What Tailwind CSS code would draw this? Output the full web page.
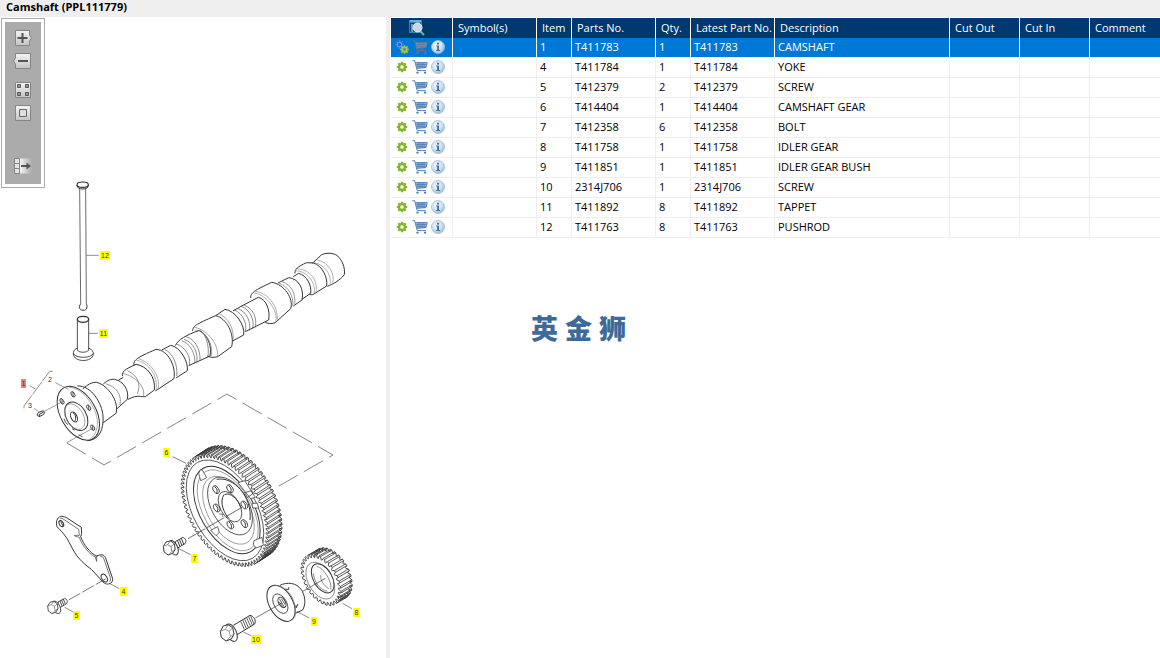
<!DOCTYPE html>
<html lang="en">
<head>
    <meta charset="UTF-8">
    <meta name="viewport" content="width=device-width, initial-scale=1.0">
    <title>Camshaft (PPL111779)</title>
    <script src="https://cdn.jsdelivr.net/npm/@tailwindcss/browser@4"></script>
</head>
<body class="flex h-screen flex-col overflow-hidden bg-white font-['Open_Sans','Noto_Sans',sans-serif] text-black">
    <!-- Shared icons -->
    <svg class="absolute h-0 w-0" aria-hidden="true">
        <defs>
            <linearGradient id="btn-fill" x1="0" y1="0" x2="0" y2="1">
                <stop offset="0" stop-color="#f4f4f4"/><stop offset="1" stop-color="#c4c4c4"/>
            </linearGradient>
            <linearGradient id="fade-fill" x1="0" y1="0" x2="1" y2="0">
                <stop offset="0" stop-color="#f4f4f4"/><stop offset="1" stop-color="#ababab"/>
            </linearGradient>
            <radialGradient id="info-fill" cx=".4" cy=".35" r=".65">
                <stop offset="0" stop-color="#f2f8fc"/><stop offset=".6" stop-color="#cfe1ee"/><stop offset="1" stop-color="#9dbfd8"/>
            </radialGradient>
            <symbol id="icon-gear" viewBox="0 0 12 12">
                <g stroke="#82b52a" stroke-width="2.2">
                    <path d="M6 .8V11.2M.8 6H11.2M2.3 2.3L9.7 9.7M9.7 2.3L2.3 9.7"/>
                </g>
                <circle cx="6" cy="6" r="2.9" fill="#fff" stroke="#82b52a" stroke-width="2.2"/>
            </symbol>
            <symbol id="icon-gears" viewBox="0 0 14 14">
                <g stroke="#4c7de0" stroke-width="1.6">
                    <path d="M4.5 .3V8.7M.3 4.5H8.7M1.5 1.5L7.5 7.5M7.5 1.5L1.5 7.5"/>
                </g>
                <circle cx="4.5" cy="4.5" r="2.2" fill="#1c62c8" stroke="#6b96ee" stroke-width="1.2"/>
                <g stroke="#9ac43a" stroke-width="1.8">
                    <path d="M9.5 5.2V13.8M5.2 9.5H13.8M6.4 6.4L12.6 12.6M12.6 6.4L6.4 12.6"/>
                </g>
                <circle cx="9.5" cy="9.5" r="2.2" fill="#4b86b0" stroke="#a4cb45" stroke-width="1.6"/>
            </symbol>
            <symbol id="icon-cart" viewBox="0 0 16 14">
                <path d="M3.5 2.5H15L14 7.5L4.8 8.2Z" fill="#b9d0e8"/>
                <path d="M.3 .7H2.6L5.2 10.6H14M3.3 2.6H15.3L14 7.6L4.7 8.4M3.8 4.3H14.6M4.3 6.2H14.2M6 2.6V8M8 2.6V8M10 2.6V8M12 2.6V8" fill="none" stroke="#4a79b0" stroke-width=".9"/>
                <path d="M4.4 12.7H6.6M12 12.7H14.2" stroke="#4a79b0" stroke-width="1.8"/>
            </symbol>
            <symbol id="icon-cart-muted" viewBox="0 0 16 14">
                <path d="M3.5 2.5H15L14 7.5L4.8 8.2Z" fill="#6fa3d4"/>
                <path d="M.3 .7H2.6L5.2 10.6H14M3.3 2.6H15.3L14 7.6L4.7 8.4M3.8 4.3H14.6M4.3 6.2H14.2M6 2.6V8M8 2.6V8M10 2.6V8M12 2.6V8" fill="none" stroke="#66788e" stroke-width=".9"/>
                <path d="M4.4 12.7H6.6M12 12.7H14.2" stroke="#66788e" stroke-width="1.8"/>
            </symbol>
            <symbol id="icon-info" viewBox="0 0 14 14">
                <circle cx="7" cy="7" r="6.5" fill="url(#info-fill)" stroke="#9fbfd8" stroke-width=".8"/>
                <path d="M6 2.8H8V4.6H6ZM5.2 5.6H8V10H9V11H5.2V10H6.2V6.6H5.2Z" fill="#3f6fa5"/>
            </symbol>
        </defs>
    </svg>

    <header class="h-[17px] shrink-0 bg-[#efefef] pl-[6px]">
        <h1 class="text-[11px] leading-[14px] font-bold">Camshaft (PPL111779)</h1>
    </header>

    <main class="flex min-h-0 flex-1">
        <!-- Illustration -->
        <section class="relative w-[386px] shrink-0 overflow-hidden">
            <svg viewBox="0 17 386 641" class="block w-full" fill="none" stroke="#333" stroke-width="1" font-family="Liberation Sans, Arial, sans-serif" font-size="7">
                <!-- assembly lines -->
                <path d="M67 443L104 465L227 394L333 455L272 490" stroke="#666" stroke-width=".8" stroke-dasharray="22 7"/>

                <!-- pushrod and tappet -->
                <g transform="translate(60 170) scale(.33333)" stroke-width="2.6">
                    <ellipse cx="68" cy="44" rx="17" ry="8" stroke-width="3.5"/>
                    <path d="M51 46C52 54 57 57 68 57S84 54 85 46" stroke-width="3"/>
                    <path d="M59 56L62 402M77 56L79 402" stroke="#555"/>
                    <path d="M62 402C56 408 56 420 69 421S83 408 79 402" stroke-width="3"/>
                    <ellipse cx="69" cy="448" rx="17" ry="9" stroke-width="4"/>
                    <path d="M52 449V540C56 549 82 549 86 540V449" />
                    <path d="M52 534C42 538 40 545 40 552C42 578 98 578 100 552C100 545 96 538 86 534M40 550C46 566 94 566 100 550"/>
                    <path d="M79 256H116M87 490H114" stroke="#555" stroke-width="2"/>
                </g>

                <!-- camshaft, flange end -->
                <g transform="translate(0 340) scale(.33333)" stroke-width="3">
                    <path d="M232 138C275 136 306 190 309 228C312 268 298 300 262 302"/>
                    <ellipse cx="235" cy="220" rx="88" ry="53" transform="rotate(60 235 220)" fill="#fff"/>
                    <path d="M207 142C250 142 288 205 292 240C295 275 278 292 270 298" stroke="#888" stroke-width="2"/>
                    <ellipse cx="229" cy="229" rx="46" ry="30" transform="rotate(60 229 229)"/>
                    <ellipse cx="224" cy="230" rx="42" ry="26" transform="rotate(60 224 230)" stroke="#888" stroke-width="2"/>
                    <ellipse cx="222" cy="231" rx="16" ry="9" transform="rotate(65 222 231)"/>
                    <path d="M219 218C228 224 229 238 224 244"/>
                    <g stroke-width="2.5">
                        <ellipse cx="186" cy="184" rx="9" ry="5" transform="rotate(60 186 184)"/>
                        <ellipse cx="219" cy="163" rx="9" ry="5" transform="rotate(60 219 163)"/>
                        <ellipse cx="266" cy="203" rx="9" ry="5" transform="rotate(60 266 203)"/>
                        <ellipse cx="278" cy="263" rx="9" ry="5" transform="rotate(60 278 263)"/>
                        <path d="M192 236C195 246 200 252 204 254M216 266L224 270M236 284L248 291M219 156V171M186 178V191M266 197V210M278 257V270"/>
                    </g>
                    <path d="M248 147C262 134 276 126 290 127C325 136 358 185 348 220L310 248"/>
                    <path d="M310 132C322 120 334 117 344 118C372 124 388 152 382 178L350 207"/>
                    <path d="M317 131C350 140 366 165 360 196" stroke-width="2" stroke="#666"/>
                    <path d="M368 108C364 96 374 88 408 73C442 78 468 112 463 150L436 170C422 172 416 162 384 178M356 120L370 112"/>
                    <path d="M370 101C404 108 438 140 430 169M382 92C412 105 424 130 412 162" stroke-width="2" stroke="#666"/>
                    <path d="M402 77C400 60 408 54 468 28C506 30 528 80 522 116L466 153"/>
                    <path d="M408 60C446 68 476 108 468 150M412 55C450 64 484 108 474 148" stroke="#888" stroke-width="2"/>
                    <!-- dowel and item bracket -->
                    <path d="M158 94H149L72 198V208" stroke="#555" stroke-width="2" stroke-dasharray="46 3"/>
                    <path d="M89 137L106 147M166 128L205 148M102 205L116 215M135 213L187 185M280 264L200 308" stroke="#666" stroke-width="2"/>
                    <path d="M112 222L116 217L130 212L134 217L131 223L118 230L112 226ZM118 230V223L131 216"/>
                </g>

                <!-- camshaft, far end -->
                <g transform="translate(150 240) scale(.33333)" stroke-width="3">
                    <path d="M35 330L62 316C90 320 116 365 112 392L78 414"/>
                    <path d="M44 328C68 340 84 372 80 408" stroke-width="2" stroke="#555"/>
                    <path d="M76 317C84 298 110 285 148 271C176 285 186 325 180 348L116 377"/>
                    <path d="M80 312C104 320 124 350 118 376M96 302C122 312 138 345 134 370M102 298C130 306 146 340 140 367M108 290C138 298 152 332 150 362M150 272C170 284 178 320 174 350" stroke-width="2" stroke="#555"/>
                    <path d="M128 273C128 260 134 254 197 227C232 235 254 285 245 320L203 350C190 354 180 352 172 348"/>
                    <path d="M133 262C176 270 208 318 202 350M136 270C170 275 190 310 184 348" stroke-width="2" stroke="#777"/>
                    <path d="M197 227L225 208C256 212 286 256 281 285L248 303"/>
                    <path d="M204 220C234 230 254 268 249 300" stroke="#777" stroke-width="2"/>
                    <path d="M249 213L275 198L325 172C350 178 361 212 356 240L286 275"/>
                    <path d="M254 210C278 222 292 248 286 275M264 206C288 214 304 244 298 272M274 199C298 208 315 238 308 266M283 196C308 204 322 232 316 262" stroke="#555" stroke-width="2"/>
                    <path d="M302 174C302 158 312 152 365 127C402 132 432 176 422 206L376 248C362 253 352 251 345 246"/>
                    <path d="M308 158C350 162 388 214 376 248M316 154C352 158 384 196 382 240" stroke="#888" stroke-width="2"/>
                    <path d="M384 129L416 113C446 116 463 146 456 180L430 198"/>
                    <path d="M388 130C415 140 432 168 428 198M396 125C424 134 438 160 434 192" stroke="#666" stroke-width="2"/>
                    <path d="M430 110L446 100C470 106 486 136 482 160L456 178"/>
                    <path d="M435 100C434 88 442 80 470 68L490 69C516 76 534 112 530 138L492 162C486 166 480 164 478 162"/>
                    <path d="M436 92C470 92 500 128 492 162M442 86C478 88 506 120 498 158" stroke="#888" stroke-width="2"/>
                    <path d="M487 70L515 44C532 37 550 39 562 47C576 60 586 82 583 104C566 124 550 132 532 139"/>
                    <path d="M493 68C524 74 546 104 540 134M502 60C534 66 556 100 548 130" stroke="#888" stroke-width="2"/>
                </g>

                <!-- timing gear -->
                <g transform="translate(150 420) scale(.33333)" stroke-width="2.2">
                    <g id="timing-gear"></g>
                    <g transform="rotate(60 225 271)">
                        <ellipse cx="225" cy="271" rx="166" ry="94"/>
                        <ellipse cx="227" cy="266" rx="144" ry="80" stroke-width="3"/>
                        <ellipse cx="229" cy="264" rx="134" ry="72" stroke="#888"/>
                        <ellipse cx="230" cy="262" rx="112" ry="62" stroke="#888"/>
                    </g>
                    <g fill="#fff">
                        <path d="M152 148L146 160L152 182L170 173L158 152ZM203 320L182 331L198 347L208 337ZM264 188L284 182L316 232L302 236ZM306 250L322 250L326 264L308 264ZM284 218L306 212L308 222L292 232ZM312 362L336 352L340 376L318 384L310 374Z"/>
                    </g>
                    <ellipse cx="240" cy="258" rx="95" ry="55" transform="rotate(60 240 258)" fill="#fff"/>
                    <path d="M200 178C250 168 308 230 300 300" stroke-width="3"/>
                    <ellipse cx="240" cy="260" rx="50" ry="29" transform="rotate(60 240 260)"/>
                    <path d="M224 224C240 214 266 240 272 262M222 224C206 246 224 284 238 296" stroke-width="3"/>
                    <g stroke-width="2.5" fill="#fff">
                        <ellipse cx="198" cy="209" rx="13" ry="8" transform="rotate(60 198 209)"/>
                        <ellipse cx="240" cy="206" rx="13" ry="8" transform="rotate(60 240 206)"/>
                        <ellipse cx="283" cy="255" rx="13" ry="8" transform="rotate(60 283 255)"/>
                        <ellipse cx="200" cy="264" rx="13" ry="8" transform="rotate(60 200 264)"/>
                        <ellipse cx="241" cy="315" rx="13" ry="8" transform="rotate(60 241 315)"/>
                        <ellipse cx="283" cy="311" rx="13" ry="8" transform="rotate(60 283 311)"/>
                        <path d="M194 200C202 206 203 214 200 219M236 197C244 203 245 211 242 216M280 246C286 252 288 259 286 265M196 255C204 261 205 268 202 274M237 306C245 312 246 320 243 325M279 302C287 308 288 316 285 321" stroke-width="3"/>
                    </g>
                    <path d="M208 282H218V290M114 356L276 262" stroke-dasharray="60 6"/>
                    <path d="M68 110L108 130M86 386L122 404" stroke="#555"/>
                </g>

                <!-- retaining plate -->
                <g transform="translate(30 500) scale(.33333)" stroke-width="3">
                    <path d="M92 49C80 54 77 66 81 80C92 92 106 104 118 128C140 174 156 186 184 208L210 236C220 250 228 253 236 252C246 250 249 242 248 236L226 172C222 164 214 162 200 168C180 160 160 132 152 110L155 100L154 82L108 52C102 50 96 48 92 49Z"/>
                    <path d="M90 54L98 56L146 88L148 106L132 106M134 108L148 112C156 136 178 164 198 172L204 166M200 168V184L196 172M210 168L220 172L240 230C244 240 240 244 238 246" stroke-width="2"/>
                    <ellipse cx="94" cy="71" rx="10" ry="6" transform="rotate(60 94 71)"/>
                    <path d="M92 64L99 78" />
                    <ellipse cx="223" cy="234" rx="13" ry="8" transform="rotate(60 223 234)"/>
                    <path d="M116 300L228 236" stroke-width="2" stroke-dasharray="40 7"/>
                    <path d="M238 250L268 266M104 322L130 336" stroke="#555" stroke-width="2"/>

                    <!-- flange bolts -->
                    <g id="bolt" fill="#fff" stroke-width="2.5" stroke-linejoin="round">
                        <path d="M84 306L104 295C111 297 114 304 110 311L88 324Z"/>
                        <path d="M90 303L96 318M95 300L101 315M100 297L106 312" fill="none"/>
                        <ellipse cx="79" cy="322" rx="20" ry="11" transform="rotate(65 79 322)"/>
                        <path d="M53 318L60 307L72 304L82 312L84 326L78 336L66 341L55 333Z"/>
                        <path d="M53 318L64 314L73 319L75 332L66 341M64 314L72 304M73 319L82 312M75 332L84 326" fill="none" stroke="#666" stroke-width="2"/>
                    </g>
                    <use href="#bolt" transform="translate(339 -227) scale(1.15)"/>
                </g>

                <!-- idler gear, hub and screw -->
                <g transform="translate(200 530) scale(.33333)" stroke-width="2.3">
                    <g id="idler-gear"></g>
                    <ellipse cx="361" cy="152" rx="60" ry="36" transform="rotate(60 361 152)" stroke="#777"/>
                    <ellipse cx="368" cy="145" rx="48" ry="28" transform="rotate(60 368 145)" stroke-width="3" fill="#fff"/>
                    <path d="M350 110C362 106 398 150 392 178M340 130C344 160 362 180 382 184M362 136C362 154 370 164 386 176" stroke="#666"/>
                    <path d="M240 166C260 156 290 156 306 182C318 205 316 225 308 240L286 250" fill="#fff" stroke-width="3"/>
                    <path d="M256 178H266V172M288 226V234L294 222" stroke-width="3"/>
                    <ellipse cx="243" cy="220" rx="59" ry="35" transform="rotate(60 243 220)" fill="#fff" stroke-width="3"/>
                    <path d="M226 166C262 166 296 216 284 262" stroke="#777"/>
                    <ellipse cx="241" cy="221" rx="32" ry="19" transform="rotate(60 241 221)"/>
                    <ellipse cx="246" cy="217" rx="17" ry="10" transform="rotate(60 246 217)" stroke-width="3"/>
                    <path d="M238 206L252 230M244 206L256 224M238 216L248 230"/>
                    <path d="M166 264L246 219M308 184L376 145" stroke-width="2"/>
                    <path d="M100 286L150 256C162 258 169 272 164 282L108 316" fill="#fff" stroke-width="3"/>
                    <path d="M122 274L133 298M128 270L139 295M134 267L145 292M140 263L151 288M146 260L157 285M152 258L162 282"/>
                    <g fill="#fff" stroke-width="3" stroke-linejoin="round">
                        <ellipse cx="94" cy="308" rx="28" ry="15" transform="rotate(65 94 308)"/>
                        <path d="M61 304L70 288L84 284L98 293L102 312L94 327L78 333L64 322Z"/>
                        <path d="M61 304L76 298L88 304L91 320L78 333M76 298L84 284M88 304L98 293M91 320L102 312" fill="none" stroke="#666" stroke-width="2"/>
                    </g>
                    <path d="M428 220L456 236M290 244L328 264M130 306L156 318" stroke="#555" stroke-width="2"/>
                </g>

                <g id="callouts" stroke="none"></g>
                <g stroke="none" fill="#333">
                    <text x="48" y="382">2</text>
                    <text x="28" y="408">3</text>
                </g>
            </svg>

            <!-- Viewer toolbar -->
            <div class="absolute top-px left-px w-[44px] border border-[#aaa] bg-white p-[3px]" role="toolbar" aria-label="Illustration tools">
                <div class="flex flex-col items-center bg-[#ababab] pt-[8px] pb-[10px]">
                    <button class="mb-[7px] block" aria-label="Zoom in">
                        <svg width="20" height="16" viewBox="0 0 20 16"><path d="M2.5 .5H16.5V5L18.5 8L16.5 11V15.5H2.5Z" fill="url(#btn-fill)" stroke="#858585"/><path d="M4.5 8H14.5M9.5 3V13" stroke="#555" stroke-width="2"/></svg>
                    </button>
                    <button class="mb-[13px] block" aria-label="Zoom out">
                        <svg width="20" height="16" viewBox="0 0 20 16"><path d="M2.5 .5H17.5V15.5H2.5V11L.5 8L2.5 5Z" fill="url(#btn-fill)" stroke="#858585"/><path d="M5 8H15" stroke="#555" stroke-width="2"/></svg>
                    </button>
                    <button class="mb-[7px] block" aria-label="Show all">
                        <svg width="16" height="16" viewBox="0 0 16 16"><path d="M.5 .5H15.5V15.5H.5Z" fill="url(#btn-fill)" stroke="#858585"/><path d="M2.5 2.5H5.5V5.5H2.5ZM10.5 2.5H13.5V5.5H10.5ZM2.5 10.5H5.5V13.5H2.5ZM10.5 10.5H13.5V13.5H10.5Z" fill="#999" stroke="#555"/></svg>
                    </button>
                    <button class="mb-[37px] block" aria-label="Fit to window">
                        <svg width="16" height="16" viewBox="0 0 16 16"><path d="M.5 .5H15.5V15.5H.5Z" fill="url(#btn-fill)" stroke="#858585"/><path d="M4.5 4.5H11.5V11.5H4.5Z" fill="#ddd" stroke="#666"/></svg>
                    </button>
                    <button class="block" aria-label="Toggle parts list">
                        <svg width="18" height="16" viewBox="0 0 18 16"><path d="M6 .5H18V15.5H6Z" fill="url(#fade-fill)"/><path d="M.5 .5H5.5V15.5H.5ZM.5 5.5H5.5M.5 10.5H5.5" fill="#e4e4e4" stroke="#858585"/><path d="M7 8H13" stroke="#555" stroke-width="2"/><path d="M12.5 4.5L17 8L12.5 11.5Z" fill="#555"/></svg>
                    </button>
                </div>
            </div>
        </section>

        <div class="w-1 shrink-0 bg-[#efefef]"></div>

        <!-- Parts list -->
        <section class="min-w-0 flex-1 pt-px pl-px">
            <table class="w-full table-fixed border-separate border-spacing-0 text-left text-[11px] leading-4">
                <colgroup>
                    <col class="w-[62px]">
                    <col class="w-[84px]">
                    <col class="w-[35px]">
                    <col class="w-[84px]">
                    <col class="w-[35px]">
                    <col class="w-[84px]">
                    <col class="w-[175px]">
                    <col class="w-[70px]">
                    <col class="w-[70px]">
                    <col>
                </colgroup>
                <thead class="bg-[#003870] text-white">
                    <tr class="h-5 whitespace-nowrap [&>th]:border-r [&>th]:border-white [&>th]:p-0 [&>th]:pl-[5px] [&>th]:font-normal [&>th:last-child]:border-r-0">
                        <th scope="col">
                            <button class="ml-[13px] block" aria-label="Search parts">
                                <svg width="17" height="16" viewBox="0 0 17 16">
                                    <path d="M0 0H13V13H0Z" fill="#2f86bd"/><path d="M1 3H12V12H1Z" fill="#0b4a80"/><path d="M1 1H12" stroke="#a8d4ec"/><path d="M2 5H4M2 7H4M2 9H4M2 11H4" stroke="#cfe6f4"/>
                                    <path d="M11 11L15 15" stroke="#7ba6c8" stroke-width="2"/>
                                    <circle cx="8.5" cy="7.5" r="4.5" fill="#c9d6e2" stroke="#e8eff5"/>
                                </svg>
                            </button>
                        </th>
                        <th scope="col">Symbol(s)</th>
                        <th scope="col">Item</th>
                        <th scope="col">Parts No.</th>
                        <th scope="col">Qty.</th>
                        <th scope="col">Latest Part No.</th>
                        <th scope="col">Description</th>
                        <th scope="col">Cut Out</th>
                        <th scope="col">Cut In</th>
                        <th scope="col">Comment</th>
                    </tr>
                </thead>
                <tbody id="parts-list"></tbody>
            </table>

            <div class="mt-[70px] ml-[140px] flex gap-[7px] font-['Noto_Sans_CJK_SC',sans-serif] text-[27px] leading-10 font-black text-[#3d6a99]" lang="zh">
                <span>英</span><span>金</span><span>狮</span>
            </div>
        </section>
    </main>

    <script>
        const parts = [
            { item: 1, no: 'T411783', qty: 1, description: 'CAMSHAFT', selected: true },
            { item: 4, no: 'T411784', qty: 1, description: 'YOKE' },
            { item: 5, no: 'T412379', qty: 2, description: 'SCREW' },
            { item: 6, no: 'T414404', qty: 1, description: 'CAMSHAFT GEAR' },
            { item: 7, no: 'T412358', qty: 6, description: 'BOLT' },
            { item: 8, no: 'T411758', qty: 1, description: 'IDLER GEAR' },
            { item: 9, no: 'T411851', qty: 1, description: 'IDLER GEAR BUSH' },
            { item: 10, no: '2314J706', qty: 1, description: 'SCREW' },
            { item: 11, no: 'T411892', qty: 8, description: 'TAPPET' },
            { item: 12, no: 'T411763', qty: 8, description: 'PUSHROD' }
        ];

        // item number, x, y, width of each marker on the illustration
        const callouts = [
            [12, 100, 251, 10], [11, 99, 329, 9], [6, 163, 448, 7], [7, 191, 554, 7], [4, 120, 587, 7],
            [5, 73, 611, 7], [8, 353, 608, 7], [9, 311, 617, 6], [10, 251, 635, 10], [1, 21, 379, 5]
        ];

        const displayParts = () => {
            let rows = '';
            parts.forEach(part => {
                const rowClass = part.selected ? 'bg-[#0078d7] text-white [&>td]:border-r-white' : '[&>td]:border-r-[#efefef]';
                const first = part.selected
                    ? '<button class="block" aria-label="Details"><svg class="h-[14px] w-[14px]"><use href="#icon-gears"/></svg></button>'
                    : '<button class="block pl-[1px] pr-[1px]" aria-label="Details"><svg class="h-[12px] w-[12px]"><use href="#icon-gear"/></svg></button>';
                const cart = part.selected ? '#icon-cart-muted' : '#icon-cart';
                rows += `
                    <tr class="h-5 whitespace-nowrap [&>td]:border-r [&>td]:border-b [&>td]:border-b-[#efefef] [&>td]:p-0 [&>td]:pb-[2px] [&>td]:pl-[3px] [&>td:last-child]:border-r-0 ${rowClass}">
                        <td>
                            <div class="flex items-center gap-[3px] pl-px">
                                ${first}
                                <button class="block" aria-label="Add to cart"><svg class="h-[14px] w-[16px]"><use href="${cart}"/></svg></button>
                                <button class="block" aria-label="Information"><svg class="h-[14px] w-[14px]"><use href="#icon-info"/></svg></button>
                            </div>
                        </td>
                        <td></td>
                        <td>${part.item}</td>
                        <td>${part.no}</td>
                        <td>${part.qty}</td>
                        <td>${part.no}</td>
                        <td>${part.description}</td>
                        <td></td>
                        <td></td>
                        <td></td>
                    </tr>
                `;
            });
            document.getElementById('parts-list').innerHTML = rows;
        };

        const displayCallouts = () => {
            document.getElementById('callouts').innerHTML = callouts.map(([item, x, y, w]) => `
                <rect x="${x}" y="${y}" width="${w}" height="9" fill="${item === 1 ? '#f08080' : '#ffff00'}"/>
                <text x="${x + w / 2}" y="${y + 7}" text-anchor="middle" fill="#333">${item}</text>
            `).join('');
        };

        // Isometric spur gear: front face at (cx, cy), back face moved by (dx, dy)
        const drawGear = (id, cx, cy, rx, ry, dx, dy, teeth, depth) => {
            const point = (angle, k) => {
                const u = rx * k * Math.cos(angle);
                const v = ry * k * Math.sin(angle);
                return [cx + u * 0.5 - v * 0.866, cy + u * 0.866 + v * 0.5];
            };
            const step = 2 * Math.PI / teeth;
            const profile = [];
            let sides = '';
            for (let i = 0; i < teeth; i++) {
                [[0, depth], [0.25, 1], [0.6, 1], [0.8, depth]].forEach(([offset, k]) => {
                    const angle = (i + offset) * step;
                    const p = point(angle, k);
                    profile.push(p);
                    if (Math.sin(angle) < 0.05 && (offset === 0.25 || offset === 0.6)) {
                        sides += `M${p[0].toFixed(1)} ${p[1].toFixed(1)}l${dx} ${dy}`;
                    }
                });
            }
            const outline = (ox, oy) => 'M' + profile.map(([x, y]) => `${(x + ox).toFixed(1)} ${(y + oy).toFixed(1)}`).join('L') + 'Z';
            document.getElementById(id).innerHTML = `
                <path d="${outline(dx, dy)}" fill="#fff" stroke-width="2.6"/>
                <path d="${sides}" stroke-width="2.4"/>
                <path d="${outline(0, 0)}" fill="#fff" stroke-width="2.6"/>
            `;
        };

        displayParts();
        displayCallouts();
        drawGear('timing-gear', 225, 271, 184, 108, 40, -26, 72, 0.94);
        drawGear('idler-gear', 363, 150, 84, 49, 34, -20, 30, 0.88);
    </script>
</body>
</html>
